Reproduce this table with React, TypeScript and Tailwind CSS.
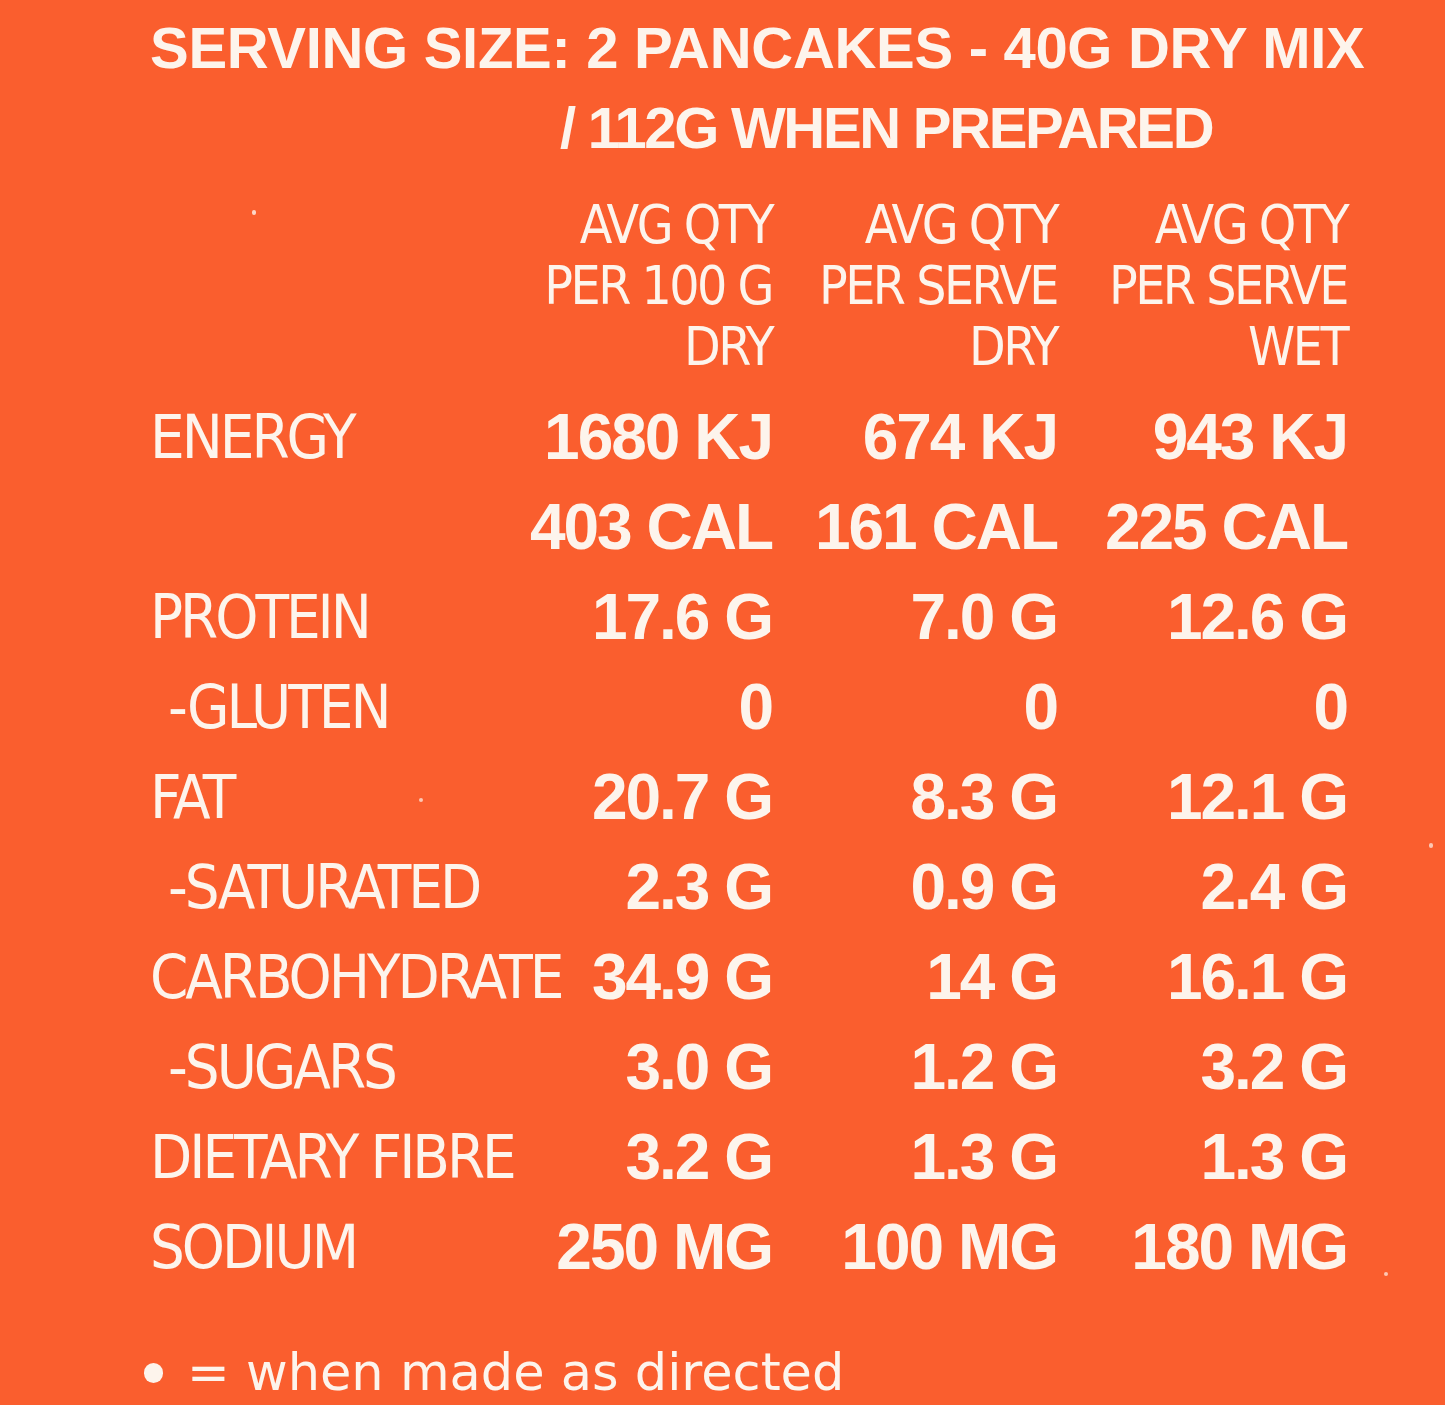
import React from "react";

const narrow = { fontFamily: "'DejaVu Sans Condensed', 'Liberation Sans Narrow', 'Liberation Sans', sans-serif" };
const bold = { fontFamily: "'Liberation Sans', Arial, sans-serif" };

type Row = { label: string; sub?: boolean; vals: [string, string, string] };

const rows: Row[] = [
  { label: "ENERGY", vals: ["1680 KJ", "674 KJ", "943 KJ"] },
  { label: "", vals: ["403 CAL", "161 CAL", "225 CAL"] },
  { label: "PROTEIN", vals: ["17.6 G", "7.0 G", "12.6 G"] },
  { label: "-GLUTEN", sub: true, vals: ["0", "0", "0"] },
  { label: "FAT", vals: ["20.7 G", "8.3 G", "12.1 G"] },
  { label: "-SATURATED", sub: true, vals: ["2.3 G", "0.9 G", "2.4 G"] },
  { label: "CARBOHYDRATE", vals: ["34.9 G", "14 G", "16.1 G"] },
  { label: "-SUGARS", sub: true, vals: ["3.0 G", "1.2 G", "3.2 G"] },
  { label: "DIETARY FIBRE", vals: ["3.2 G", "1.3 G", "1.3 G"] },
  { label: "SODIUM", vals: ["250 MG", "100 MG", "180 MG"] },
];

const heads: [string, string, string][] = [
  ["AVG QTY", "AVG QTY", "AVG QTY"],
  ["PER 100 G", "PER SERVE", "PER SERVE"],
  ["DRY", "DRY", "WET"],
];

export default function App() {
  return (
    <div className="relative w-[1445px] h-[1405px] bg-[#fa5e2e] text-[#fdf4ec] overflow-hidden">
      <span className="absolute left-[252px] top-[210px] w-[4px] h-[5px] rounded-full bg-[#fdf4ec] opacity-80" />
      <span className="absolute left-[419px] top-[798px] w-[4px] h-[4px] rounded-full bg-[#fdf4ec] opacity-70" />
      <span className="absolute left-[1429px] top-[843px] w-[4px] h-[5px] rounded-full bg-[#fdf4ec] opacity-70" />
      <span className="absolute left-[1384px] top-[1272px] w-[4px] h-[4px] rounded-full bg-[#fdf4ec] opacity-70" />

      <div className="pl-[150px] pt-[8px]">
        <div style={bold} className="font-bold text-[58px] leading-[80px] tracking-[-0.3px] whitespace-nowrap">
          <div>SERVING SIZE: 2 PANCAKES - 40G DRY MIX</div>
          <div className="pl-[410px] tracking-[-2.3px]">/ 112G WHEN PREPARED</div>
        </div>

        <div className="mt-[26px] grid grid-cols-[410px_212px_285px_290px]" style={narrow}>
          {heads.map((h, i) => (
            <React.Fragment key={i}>
              <div className="h-[61px]" />
              {h.map((t, j) => (
                <div
                  key={j}
                  className="h-[61px] flex justify-end text-[53px] leading-[61px] tracking-[-2.5px] whitespace-nowrap"
                >
                  {t}
                </div>
              ))}
            </React.Fragment>
          ))}
        </div>

        <div className="mt-[15px] grid grid-cols-[410px_212px_285px_290px]">
          {rows.map((r, i) => (
            <React.Fragment key={i}>
              <div
                style={narrow}
                className={`h-[90px] text-[61px] leading-[90px] tracking-[-3px] whitespace-nowrap ${r.sub ? "pl-[18px]" : ""}`}
              >
                {r.label}
              </div>
              {r.vals.map((v, j) => (
                <div
                  key={j}
                  style={bold}
                  className="h-[90px] flex justify-end font-bold text-[64px] leading-[90px] tracking-[-2px] whitespace-nowrap"
                >
                  {v}
                </div>
              ))}
            </React.Fragment>
          ))}
        </div>

        <div className="mt-[51px] flex items-center -ml-[6px] gap-[24px]">
          <span className="w-[19px] h-[20px] rounded-full bg-[#fdf4ec]" />
          <span
            style={{ fontFamily: "'DejaVu Sans', 'Open Sans', sans-serif" }}
            className="text-[51px] font-normal leading-[60px] whitespace-nowrap"
          >
            = when made as directed
          </span>
        </div>
      </div>
    </div>
  );
}
